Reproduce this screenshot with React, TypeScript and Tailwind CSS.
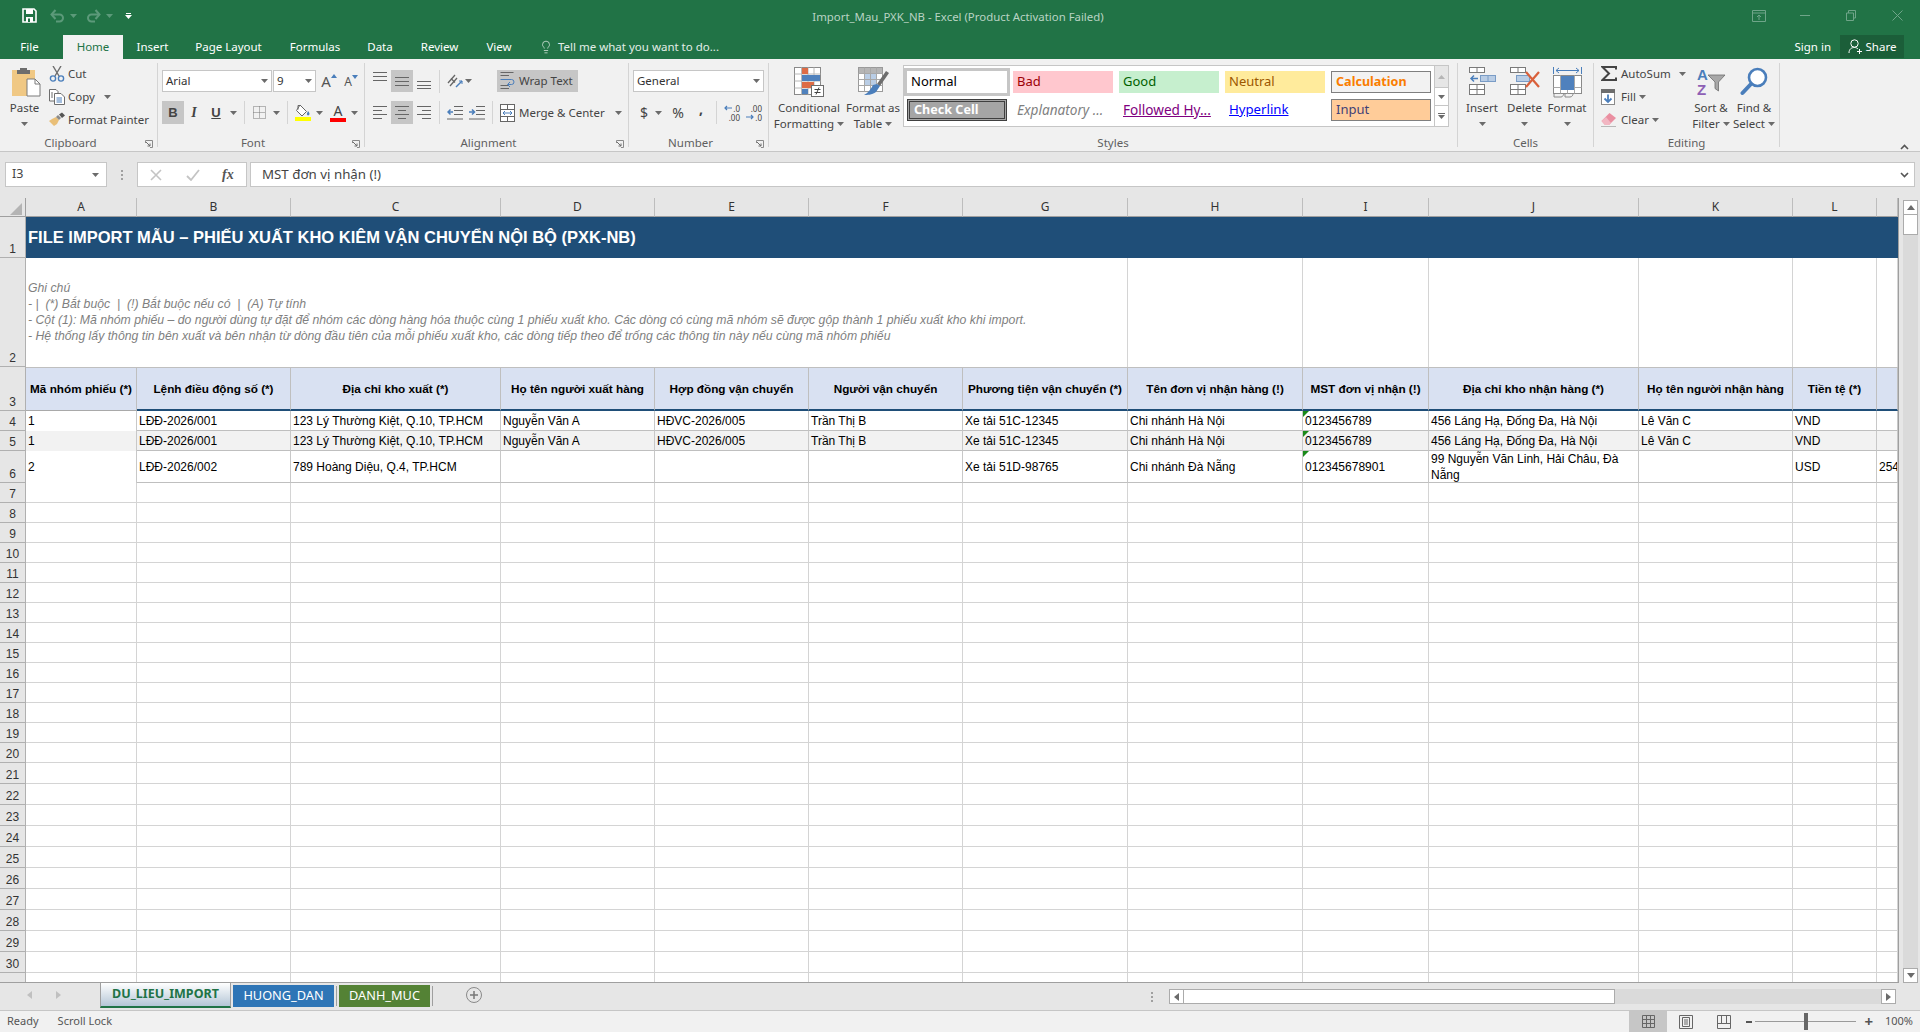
import { Fragment, type ReactNode } from "react";
import { Lightbulb } from "lucide-react";

const BLUE = "#4a7ebb";

function Caret({ color = "#6b6b6b" }: { color?: string }) {
  return (
    <svg width="7" height="4" viewBox="0 0 7 4" className="shrink-0">
      <path d="M0 0h7L3.5 4z" fill={color} />
    </svg>
  );
}

function Launcher() {
  return (
    <svg width="8" height="8" viewBox="0 0 8 8" className="absolute bottom-[-1px] right-[4px]">
      <path d="M0.5 3V0.5H7.5V7.5H5" fill="none" stroke="#8a8a8a" />
      <path d="M1 2l4 4M5 3.5V6H2.5" fill="none" stroke="#6d6d6d" />
    </svg>
  );
}

function Sep({ className }: { className: string }) {
  return <span className={`h-[23px] w-px shrink-0 bg-[#d4d4d4] ${className}`} />;
}

function Group({
  className,
  label,
  launcher,
  children,
}: {
  className: string;
  label: string;
  launcher?: boolean;
  children: ReactNode;
}) {
  return (
    <div className={`relative flex h-[84px] shrink-0 flex-col border-r border-[#d4d4d4] ${className}`}>
      <div className="h-[72px]">{children}</div>
      <div
        className={`-mb-[4px] h-[16px] text-center text-[11.5px] leading-[16px] text-[#5f5f5f] ${
          launcher ? "pr-[16px]" : ""
        }`}
      >
        {label}
      </div>
      {launcher ? <Launcher /> : null}
    </div>
  );
}

function BigBtn({
  className,
  icon,
  line1,
  line2,
}: {
  className: string;
  icon: ReactNode;
  line1: string;
  line2?: string;
}) {
  return (
    <div className={`flex shrink-0 flex-col items-center pt-[4px] text-[11.5px] leading-[16px] text-[#444] ${className}`}>
      <div className="flex h-[33px] items-start justify-center">{icon}</div>
      <div className="whitespace-nowrap">{line1}</div>
      <div className="flex h-[16px] items-center gap-[3px] whitespace-nowrap">
        {line2}
        <Caret />
      </div>
    </div>
  );
}

function Lines({ rows, w = 14, h = 16 }: { rows: [number, number, number][]; w?: number; h?: number }) {
  return (
    <svg width={w} height={h} viewBox={`0 0 ${w} ${h}`}>
      {rows.map(([x1, x2, y]) => (
        <path key={`${x1}-${y}`} d={`M${x1} ${y + 0.5}H${x2}`} stroke="#666" />
      ))}
    </svg>
  );
}

function SaveIcon() {
  return (
    <svg width="15" height="15" viewBox="0 0 15 15">
      <path d="M1 1H12L14 3V14H1z" fill="none" stroke="#fff" strokeWidth="1.6" />
      <rect x="4" y="1" width="7" height="5" fill="#fff" />
      <rect x="4" y="9" width="7" height="5" fill="#fff" />
      <rect x="6" y="10.5" width="2" height="3.5" fill="#217346" />
    </svg>
  );
}

function ArrowIcon({ flip }: { flip?: boolean }) {
  return (
    <svg width="15" height="14" viewBox="0 0 15 14" className={flip ? "-scale-x-100" : ""}>
      <path d="M2 5.5H9.5A3.5 3.5 0 0 1 9.5 12.5H6" fill="none" stroke="#5c9a7a" strokeWidth="2" />
      <path d="M5.5 1L1.5 5.5L5.5 10" fill="none" stroke="#5c9a7a" strokeWidth="2" />
    </svg>
  );
}

function PasteIcon() {
  return (
    <svg width="29" height="30" viewBox="0 0 29 30">
      <rect x="0" y="3" width="23" height="26" fill="#f0c884" />
      <path d="M8 3V1H15V3H18V7H5V3z" fill="#6d6d6d" />
      <path d="M15 12H23L28 17V29H15z" fill="#fff" stroke="#7a7a7a" />
      <path d="M23 12V17H28" fill="none" stroke="#7a7a7a" />
    </svg>
  );
}

function CutIcon() {
  return (
    <svg width="16" height="16" viewBox="0 0 16 16">
      <path d="M4 0L10 10M12 0L6 10" stroke="#6d6d6d" strokeWidth="1.4" />
      <circle cx="4" cy="12.5" r="2.6" fill="none" stroke={BLUE} strokeWidth="1.4" />
      <circle cx="12" cy="12.5" r="2.6" fill="none" stroke={BLUE} strokeWidth="1.4" />
    </svg>
  );
}

function CopyIcon() {
  return (
    <svg width="16" height="16" viewBox="0 0 16 16">
      <path d="M0.5 0.5H7L9 2.5V12H0.5z" fill="#fff" stroke="#6d6d6d" />
      <path d="M5.5 4.5H12L15.5 8V15.5H5.5z" fill="#fff" stroke="#6d6d6d" />
      <path d="M7.5 9H13M7.5 11H13M7.5 13H13" stroke={BLUE} />
      <path d="M2 4H4M2 6H4M2 8H4" stroke="#6d6d6d" />
    </svg>
  );
}

function PainterIcon() {
  return (
    <svg width="17" height="15" viewBox="0 0 17 15">
      <path d="M0 9L5 14L8 12L10 8L7 5L3 7z" fill="#e9bf78" />
      <path d="M7 5L10 8L12 6L9 3z" fill="#8a8a8a" />
      <path d="M10 2.5L13 0.5L16 3.5L13 6z" fill="#555" />
    </svg>
  );
}

function BordersIcon() {
  return (
    <svg width="13" height="13" viewBox="0 0 13 13">
      <path d="M0.5 0.5H12.5V12.5H0.5zM6.5 0.5V12.5M0.5 6.5H12.5" fill="none" stroke="#777" strokeDasharray="1 1" />
    </svg>
  );
}

function FillColorIcon() {
  return (
    <span className="flex flex-col items-center">
      <svg width="16" height="13" viewBox="0 0 16 13">
        <path d="M5 1L11.5 7.5L7 12L1.5 6.5z" fill="#fff" stroke="#666" />
        <path d="M3 5.5V1.5H5" fill="none" stroke="#666" />
        <path d="M13 7C14.5 9 15 10 14 11C13 12 11.5 11 12 9.5z" fill={BLUE} />
      </svg>
      <span className="h-[4px] w-[16px] bg-[#ffff00]" />
    </span>
  );
}

function OrientIcon() {
  return (
    <svg width="16" height="16" viewBox="0 0 16 16">
      <path d="M1 10L8 2M3 13L10 5" stroke="#666" strokeWidth="1.3" />
      <path d="M4 5.5L8 9.5" stroke="#666" strokeWidth="1.3" />
      <path d="M9 14L15 8" stroke={BLUE} strokeWidth="1.5" />
      <path d="M15 8V11M15 8H12" stroke={BLUE} />
    </svg>
  );
}

function WrapIcon() {
  return (
    <svg width="15" height="18" viewBox="0 0 15 18">
      <path d="M0.5 0.5H13.5M0.5 13.5H9M0.5 16.5H9" stroke="#666" />
      <path d="M0.5 3.5H9" stroke="#666" />
      <path d="M0.5 7.5H11.5A2.5 2.5 0 0 1 11.5 12.5H8" fill="none" stroke={BLUE} />
      <path d="M10 10L7.5 12.5L10 15" fill="none" stroke={BLUE} />
    </svg>
  );
}

function MergeIcon() {
  return (
    <svg width="15" height="18" viewBox="0 0 15 18">
      <rect x="0.5" y="0.5" width="14" height="17" fill="#fff" stroke="#666" />
      <path d="M0.5 5.5H14.5M0.5 12.5H14.5M7.5 0.5V5.5M7.5 12.5V17.5" stroke="#666" />
      <path d="M3 9H12M5 7L3 9L5 11M10 7L12 9L10 11" fill="none" stroke={BLUE} />
    </svg>
  );
}

function IndentIcon({ flip }: { flip?: boolean }) {
  return (
    <svg width="16" height="14" viewBox="0 0 16 14">
      <path d="M7 0.5H16M7 4.5H16M7 8.5H16M0 13H16" stroke="#666" />
      <path
        d={flip ? "M0 6H5M3 3.5L5.5 6L3 8.5" : "M6 6H1M3.5 3.5L1 6L3.5 8.5"}
        fill="none"
        stroke={BLUE}
        strokeWidth="1.5"
      />
    </svg>
  );
}

function DecimalIcon({ more }: { more?: boolean }) {
  return (
    <span className="relative flex h-[18px] w-[16px] flex-col items-end text-[8px] leading-[9px] text-[#444]">
      <span>{more ? ".0" : ".00"}</span>
      <span>{more ? ".00" : ".0"}</span>
      <svg width="8" height="6" viewBox="0 0 8 6" className={`absolute left-0 ${more ? "top-[1px]" : "top-[10px]"}`}>
        <path
          d={more ? "M8 3H1M3 1L1 3L3 5" : "M0 3H7M5 1L7 3L5 5"}
          fill="none"
          stroke={BLUE}
          strokeWidth="1.2"
        />
      </svg>
    </span>
  );
}

function CondFormatIcon() {
  return (
    <svg width="30" height="30" viewBox="0 0 30 30">
      <rect x="0.5" y="0.5" width="26" height="27" fill="#fff" stroke="#8a8a8a" />
      <path d="M7.5 0.5V27.5M14 0.5V27.5M20 0.5V27.5M0.5 7H26.5M0.5 14H26.5M0.5 21H26.5" stroke="#b8b8b8" />
      <rect x="8" y="1" width="6" height="6" fill="#dd6c46" />
      <rect x="8" y="8" width="18" height="6" fill="#4f81bd" />
      <rect x="8" y="15" width="12" height="6" fill="#dd6c46" />
      <rect x="8" y="22" width="6" height="5" fill="#4f81bd" />
      <rect x="17.5" y="18.5" width="12" height="11" fill="#fff" stroke="#6d6d6d" />
      <path d="M20.5 22.5H26.5M20.5 25.5H26.5M25 20.5L22 27.5" stroke="#444" />
    </svg>
  );
}

function FormatTableIcon() {
  return (
    <svg width="31" height="29" viewBox="0 0 31 29">
      <rect x="0.5" y="0.5" width="24" height="24" fill="#fff" stroke="#9a9a9a" />
      <rect x="1" y="1" width="23" height="5" fill="#b5b5b5" />
      <rect x="6" y="6" width="13" height="13" fill="#b9cde5" />
      <path d="M6.5 0.5V24.5M12.5 0.5V24.5M18.5 0.5V24.5M0.5 6.5H24.5M0.5 12.5H24.5M0.5 18.5H24.5" stroke="#a8a8a8" />
      <path d="M19 17L28 4L31 6L22 19z" fill="#6d6d6d" />
      <path d="M19 17L22 19L18 25C14 28 9 28 6 28C10 26 13 22 15 18z" fill={BLUE} />
    </svg>
  );
}

function SmallGrid({ x, y, w, h, cols, rows }: { x: number; y: number; w: number; h: number; cols: number; rows: number }) {
  const d: string[] = [];
  for (let i = 1; i < cols; i++) d.push(`M${x + (w * i) / cols} ${y}V${y + h}`);
  for (let i = 1; i < rows; i++) d.push(`M${x} ${y + (h * i) / rows}H${x + w}`);
  return (
    <>
      <rect x={x} y={y} width={w} height={h} fill="#fff" stroke="#7a7a7a" />
      <path d={d.join("")} stroke="#7a7a7a" fill="none" />
    </>
  );
}

function InsertIcon() {
  return (
    <svg width="27" height="28" viewBox="0 0 27 28">
      <SmallGrid x={0.5} y={0.5} w={15} h={5} cols={2} rows={1} />
      <rect x="11.5" y="8.5" width="15" height="6" fill="#b9cde5" stroke="#7a9cc6" />
      <path d="M19 8.5V14.5" stroke="#7a9cc6" />
      <path d="M9 11.5H2M5 8.5L2 11.5L5 14.5" fill="none" stroke={BLUE} strokeWidth="1.5" />
      <SmallGrid x={0.5} y={17.5} w={15} h={10} cols={2} rows={2} />
    </svg>
  );
}

function DeleteIcon() {
  return (
    <svg width="30" height="28" viewBox="0 0 30 28">
      <SmallGrid x={0.5} y={0.5} w={15} h={5} cols={2} rows={1} />
      <rect x="6.5" y="8.5" width="13" height="6" fill="#b9cde5" stroke="#7a9cc6" />
      <SmallGrid x={0.5} y={17.5} w={15} h={10} cols={2} rows={2} />
      <path d="M16 5L29 20M29 5L16 20" stroke="#d9603b" strokeWidth="2.2" />
    </svg>
  );
}

function FormatCellsIcon() {
  return (
    <svg width="29" height="32" viewBox="0 0 29 32">
      <path d="M3 3.5H26M6 1L3 3.5L6 6M23 1L26 3.5L23 6M0.5 0V7M28.5 0V7" fill="none" stroke={BLUE} />
      <rect x="0.5" y="8.5" width="28" height="18" fill="#fff" stroke="#8a8a8a" />
      <path d="M7.5 8.5V26.5M21.5 8.5V26.5M0.5 20.5H28.5M14.5 20.5V26.5" stroke="#a8a8a8" />
      <rect x="8" y="9" width="13" height="14" fill="#4f81bd" />
      <path d="M1 27V30H8C10 30 10 28 11 27M12 27V30H17C19 30 20 28 20 27" fill="none" stroke="#8a8a8a" />
    </svg>
  );
}

function SigmaIcon() {
  return (
    <svg width="16" height="15" viewBox="0 0 16 15">
      <path d="M15 3.5V1H1.5L8 7.5L1.5 14H15V11.5" fill="none" stroke="#444" strokeWidth="2" />
    </svg>
  );
}

function FillDownIcon() {
  return (
    <svg width="14" height="16" viewBox="0 0 14 16">
      <rect x="0.5" y="0.5" width="13" height="15" fill="#fff" stroke="#8a8a8a" />
      <rect x="0" y="0" width="14" height="4" fill="#6d6d6d" />
      <path d="M7 5.5V13M3.5 9.5L7 13L10.5 9.5" fill="none" stroke={BLUE} strokeWidth="1.8" />
    </svg>
  );
}

function EraserIcon() {
  return (
    <svg width="16" height="15" viewBox="0 0 16 15">
      <path d="M0.5 9L8.5 1L15 6L8 13H4z" fill="#ea8fa1" />
      <path d="M0.5 9L4 13H8L10 11L5 5z" fill="#f2b6c2" />
      <path d="M0 14.5H15" stroke="#b8b8b8" />
    </svg>
  );
}

function SortIcon() {
  return (
    <svg width="29" height="29" viewBox="0 0 29 29">
      <text x="0" y="13" fontFamily="Liberation Sans" fontWeight="700" fontSize="15" fill={BLUE}>
        A
      </text>
      <text x="0" y="28" fontFamily="Liberation Sans" fontWeight="700" fontSize="15" fill="#8e5fb5">
        Z
      </text>
      <path d="M11 8H28L21.5 15V24L18 21.5V15z" fill="#a8a8a8" stroke="#6d6d6d" strokeWidth="0.8" />
    </svg>
  );
}

function FindIcon() {
  return (
    <svg width="28" height="29" viewBox="0 0 28 29">
      <circle cx="17.5" cy="10.5" r="8.5" fill="#fff" stroke={BLUE} strokeWidth="2.6" />
      <path d="M11 17L2.5 26" stroke={BLUE} strokeWidth="4" strokeLinecap="round" />
    </svg>
  );
}

function TitleBar() {
  return (
    <div className="flex h-[35px] shrink-0 items-center bg-[#217346]">
      <div className="flex w-[398px] items-center pb-[4px] pl-[22px]">
        <SaveIcon />
        <span className="ml-[13px]">
          <ArrowIcon />
        </span>
        <span className="ml-[5px]">
          <Caret color="#5c9a7a" />
        </span>
        <span className="ml-[9px]">
          <ArrowIcon flip />
        </span>
        <span className="ml-[5px]">
          <Caret color="#5c9a7a" />
        </span>
        <span className="ml-[12px] flex flex-col items-center gap-[1px]">
          <span className="h-px w-[5px] bg-white" />
          <Caret color="#fff" />
        </span>
      </div>
      <div className="flex-1 pb-[1px] text-center text-[11.4px] text-[#b9d4c4]">
        Import_Mau_PXK_NB - Excel (Product Activation Failed)
      </div>
      <div className="flex w-[402px] items-center justify-end pb-[4px] pr-[17px]">
        <svg width="14" height="12" viewBox="0 0 14 12" className="mr-[34px]">
          <path d="M0.5 0.5H13.5V11.5H0.5zM0.5 3H13.5M7 10V5M5 7L7 5L9 7" fill="none" stroke="#6fa589" />
        </svg>
        <span className="mr-[36px] h-px w-[10px] bg-[#6fa589]" />
        <svg width="10" height="11" viewBox="0 0 10 11" className="mr-[36px]">
          <path d="M0.5 3H7.5V10.5H0.5zM2.5 3V0.5H9.5V8H7.5" fill="none" stroke="#6fa589" />
        </svg>
        <svg width="11" height="11" viewBox="0 0 11 11">
          <path d="M0.5 0.5L10.5 10.5M10.5 0.5L0.5 10.5" stroke="#6fa589" />
        </svg>
      </div>
    </div>
  );
}

function TabBar() {
  return (
    <div className="flex h-[24px] shrink-0 items-stretch bg-[#217346] text-[11.5px] leading-[24px] text-white">
      <div className="w-[59px] text-center">File</div>
      <div className="ml-[4px] w-[60px] bg-[#f1f1f1] text-center text-[#217346]">Home</div>
      <div className="w-[59px] text-center">Insert</div>
      <div className="w-[93px] text-center">Page Layout</div>
      <div className="w-[80px] text-center">Formulas</div>
      <div className="w-[50px] text-center">Data</div>
      <div className="w-[69px] text-center">Review</div>
      <div className="w-[50px] text-center">View</div>
      <div className="ml-[15px] flex items-center gap-[5px] text-[#e3eee8]">
        <Lightbulb size={14} strokeWidth={1.25} />
        <span>Tell me what you want to do...</span>
      </div>
      <div className="ml-auto mr-[9px]">Sign in</div>
      <div className="mr-[16px] flex h-[23px] w-[64px] items-center justify-center gap-[3px] bg-[#1b5e39]">
        <svg width="15" height="15" viewBox="0 0 15 15">
          <circle cx="6.5" cy="4.5" r="3.7" fill="none" stroke="#fff" />
          <path d="M1 14C1 10 3.5 8.5 6.5 8.5C8 8.5 9 9 10 10" fill="none" stroke="#fff" />
          <path d="M11.5 10V15M9 12.5H14" stroke="#fff" />
        </svg>
        <span>Share</span>
      </div>
    </div>
  );
}

function ClipboardGroup() {
  return (
    <Group className="w-[158px]" label="Clipboard" launcher>
      <div className="flex">
        <div className="flex w-[49px] flex-col items-center pt-[4px] text-[11.5px] leading-[16px] text-[#444]">
          <div className="ml-[4px] h-[33px]">
            <PasteIcon />
          </div>
          <div>Paste</div>
          <div className="flex h-[16px] items-center">
            <Caret />
          </div>
        </div>
        <div className="-mt-[1px] flex flex-col text-[11.5px] text-[#444]">
          <div className="flex h-[23px] items-center">
            <span className="flex w-[19px]">
              <CutIcon />
            </span>
            Cut
          </div>
          <div className="flex h-[23px] items-center">
            <span className="flex w-[19px]">
              <CopyIcon />
            </span>
            Copy
            <span className="ml-[9px]">
              <Caret />
            </span>
          </div>
          <div className="flex h-[23px] items-center">
            <span className="flex w-[19px]">
              <PainterIcon />
            </span>
            Format Painter
          </div>
        </div>
      </div>
    </Group>
  );
}

function FontGroup() {
  return (
    <Group className="w-[207px]" label="Font" launcher>
      <div className="mt-[7px] flex h-[22px] items-stretch pl-[4px] text-[11.5px] text-[#333]">
        <div className="flex w-[110px] items-center justify-between border border-[#c6c6c6] bg-white px-[3px]">
          Arial
          <Caret />
        </div>
        <div className="ml-px flex w-[43px] items-center justify-between border border-[#c6c6c6] bg-white px-[3px]">
          9
          <Caret />
        </div>
        <div className="ml-[3px] flex w-[20px] items-center justify-center text-[15px] text-[#555]">
          A
          <svg width="6" height="4" viewBox="0 0 6 4" className="mb-[10px]">
            <path d="M3 0L6 4H0z" fill={BLUE} />
          </svg>
        </div>
        <div className="ml-[2px] flex w-[20px] items-center justify-center pt-[2px] text-[12px] text-[#555]">
          A
          <svg width="6" height="4" viewBox="0 0 6 4" className="mb-[10px]">
            <path d="M0 0H6L3 4z" fill={BLUE} />
          </svg>
        </div>
      </div>
      <div className="mt-[9px] flex h-[23px] items-center pl-[4px] font-['Liberation_Sans',sans-serif] text-[13px] text-[#444]">
        <span className="flex h-full w-[22px] items-center justify-center bg-[#c6c6c6] font-bold">B</span>
        <span className="w-[20px] text-center font-['Liberation_Serif',serif] text-[14px] font-bold italic">I</span>
        <span className="ml-[2px] w-[20px] text-center font-bold underline">U</span>
        <span className="flex w-[14px] justify-center">
          <Caret />
        </span>
        <Sep className="ml-[4px]" />
        <span className="flex w-[28px] justify-center">
          <BordersIcon />
        </span>
        <span className="flex w-[7px] justify-center">
          <Caret />
        </span>
        <Sep className="ml-[7px]" />
        <span className="ml-[7px] flex w-[16px] justify-center">
          <FillColorIcon />
        </span>
        <span className="ml-[5px] flex w-[7px] justify-center">
          <Caret />
        </span>
        <span className="ml-[7px] flex w-[16px] flex-col items-center font-['Noto_Sans',sans-serif] text-[14px] leading-[14px]">
          A
          <span className="h-[4px] w-[16px] bg-[#ff0000]" />
        </span>
        <span className="ml-[5px] flex w-[7px] justify-center">
          <Caret />
        </span>
      </div>
    </Group>
  );
}

function AlignmentGroup() {
  return (
    <Group className="w-[264px]" label="Alignment" launcher>
      <div className="mt-[7px] flex h-[22px] items-center pl-[8px] text-[11.5px] text-[#444]">
        <span className="flex w-[14px]">
          <Lines rows={[[0, 14, 2], [0, 14, 6], [0, 14, 10]]} h={22} />
        </span>
        <span className="ml-[4px] flex h-full w-[22px] items-center justify-center bg-[#c6c6c6]">
          <Lines rows={[[0, 14, 7], [0, 14, 11], [0, 14, 15]]} h={22} />
        </span>
        <span className="ml-[4px] flex w-[14px]">
          <Lines rows={[[0, 14, 11], [0, 14, 15], [0, 14, 18]]} h={22} />
        </span>
        <Sep className="ml-[8px]" />
        <span className="ml-[7px] flex w-[16px]">
          <OrientIcon />
        </span>
        <span className="ml-[2px] flex w-[7px]">
          <Caret />
        </span>
        <span className="ml-[25px] flex h-full w-[81px] items-center bg-[#c6c6c6] pl-[3px]">
          <WrapIcon />
          <span className="ml-[4px] whitespace-nowrap">Wrap Text</span>
        </span>
      </div>
      <div className="mt-[9px] flex h-[23px] items-center pl-[8px] text-[11.5px] text-[#444]">
        <span className="flex w-[14px]">
          <Lines rows={[[0, 14, 1], [0, 9, 5], [0, 14, 9], [0, 9, 13]]} />
        </span>
        <span className="ml-[4px] flex h-full w-[22px] items-center justify-center bg-[#c6c6c6]">
          <Lines rows={[[0, 14, 1], [3, 11, 5], [0, 14, 9], [3, 11, 13]]} />
        </span>
        <span className="ml-[4px] flex w-[14px]">
          <Lines rows={[[0, 14, 1], [5, 14, 5], [0, 14, 9], [5, 14, 13]]} />
        </span>
        <Sep className="ml-[8px]" />
        <span className="ml-[7px] flex w-[16px]">
          <IndentIcon />
        </span>
        <span className="ml-[6px] flex w-[16px]">
          <IndentIcon flip />
        </span>
        <Sep className="ml-[7px]" />
        <span className="ml-[7px] flex w-[15px]">
          <MergeIcon />
        </span>
        <span className="ml-[4px] whitespace-nowrap">Merge &amp; Center</span>
        <span className="ml-[10px]">
          <Caret />
        </span>
      </div>
    </Group>
  );
}

function NumberGroup() {
  return (
    <Group className="w-[140px]" label="Number" launcher>
      <div className="mt-[7px] flex h-[22px] pl-[4px] text-[11.5px] text-[#333]">
        <div className="flex w-[131px] items-center justify-between border border-[#c6c6c6] bg-white px-[3px]">
          General
          <Caret />
        </div>
      </div>
      <div className="mt-[9px] flex h-[23px] items-center pl-[10px] text-[14px] text-[#444]">
        <span className="w-[10px] text-center">$</span>
        <span className="ml-[6px] flex w-[7px]">
          <Caret />
        </span>
        <span className="ml-[7px] w-[18px] text-center">%</span>
        <span className="ml-[10px] mb-[8px] w-[8px] text-center font-bold leading-[10px]">,</span>
        <Sep className="ml-[11px]" />
        <span className="ml-[7px]">
          <DecimalIcon more />
        </span>
        <span className="ml-[6px]">
          <DecimalIcon />
        </span>
      </div>
    </Group>
  );
}

function StyleCell({ className, children }: { className: string; children: string }) {
  return (
    <div className={`flex h-[22px] w-[100px] items-center overflow-hidden whitespace-nowrap pl-[4px] ${className}`}>
      {children}
    </div>
  );
}

function StylesGroup() {
  return (
    <Group className="w-[689px]" label="Styles">
      <div className="flex">
        <BigBtn className="ml-[6px] w-[68px]" icon={<CondFormatIcon />} line1="Conditional" line2="Formatting" />
        <BigBtn className="w-[60px]" icon={<FormatTableIcon />} line1="Format as" line2="Table" />
        <div className="mt-[2px] flex h-[62px] w-[546px] border border-[#c6c6c6] bg-white">
          <div className="grid w-[528px] grid-cols-[100px_100px_100px_100px_100px] content-start gap-x-[6px] gap-y-[6px] pl-[3px] pt-[5px]">
            <StyleCell className="bg-white text-[13px] text-black shadow-[0_0_0_3px_#c6c6c6]">Normal</StyleCell>
            <StyleCell className="bg-[#ffc7ce] text-[13px] text-[#9c0006]">Bad</StyleCell>
            <StyleCell className="bg-[#c6efce] text-[13px] text-[#006100]">Good</StyleCell>
            <StyleCell className="bg-[#ffeb9c] text-[13px] text-[#9c5700]">Neutral</StyleCell>
            <StyleCell className="border border-[#7f7f7f] bg-[#f2f2f2] text-[12.6px] font-bold text-[#fa7d00]">Calculation</StyleCell>
            <StyleCell className="border-[3px] border-double border-[#3f3f3f] bg-[#a5a5a5] pl-[1px] text-[12.6px] font-bold text-white">
              Check Cell
            </StyleCell>
            <StyleCell className="text-[13.6px] italic text-[#7f7f7f]">Explanatory ...</StyleCell>
            <StyleCell className="text-[13.6px] text-[#800080] underline">Followed Hy...</StyleCell>
            <StyleCell className="text-[13.2px] text-[#0000ff] underline">Hyperlink</StyleCell>
            <StyleCell className="border border-[#7f7f7f] bg-[#ffcc99] text-[13px] text-[#3f3f76]">Input</StyleCell>
          </div>
          <div className="ml-auto flex w-[14px] flex-col border-l border-[#c6c6c6]">
            <div className="flex h-[21px] items-center justify-center bg-[#e6e6e6]">
              <svg width="7" height="4" viewBox="0 0 7 4">
                <path d="M0 4H7L3.5 0z" fill="#b5b5b5" />
              </svg>
            </div>
            <div className="flex h-[19px] items-center justify-center border-y border-[#c6c6c6]">
              <Caret />
            </div>
            <div className="flex flex-1 flex-col items-center justify-center gap-[1px]">
              <span className="h-px w-[7px] bg-[#6b6b6b]" />
              <Caret />
            </div>
          </div>
        </div>
      </div>
    </Group>
  );
}

function CellsGroup() {
  return (
    <Group className="w-[136px]" label="Cells">
      <div className="flex pl-[3px]">
        <BigBtn className="w-[42px]" icon={<InsertIcon />} line1="Insert" />
        <BigBtn className="w-[43px]" icon={<DeleteIcon />} line1="Delete" />
        <BigBtn className="w-[42px]" icon={<FormatCellsIcon />} line1="Format" />
      </div>
    </Group>
  );
}

function EditingGroup() {
  return (
    <Group className="w-[186px]" label="Editing">
      <div className="flex">
        <div className="-mt-[1px] flex w-[96px] flex-col pl-[7px] text-[11.5px] text-[#444]">
          <div className="flex h-[23px] items-center">
            <span className="flex w-[20px]">
              <SigmaIcon />
            </span>
            AutoSum
            <span className="ml-[8px]">
              <Caret />
            </span>
          </div>
          <div className="flex h-[23px] items-center">
            <span className="flex w-[20px]">
              <FillDownIcon />
            </span>
            Fill
            <span className="ml-[3px]">
              <Caret />
            </span>
          </div>
          <div className="flex h-[23px] items-center">
            <span className="flex w-[20px]">
              <EraserIcon />
            </span>
            Clear
            <span className="ml-[3px]">
              <Caret />
            </span>
          </div>
        </div>
        <BigBtn className="w-[42px]" icon={<SortIcon />} line1="Sort &" line2="Filter" />
        <BigBtn className="w-[44px]" icon={<FindIcon />} line1="Find &" line2="Select" />
      </div>
    </Group>
  );
}

function Ribbon() {
  return (
    <div className="flex h-[93px] shrink-0 border-b border-[#c6c6c6] bg-[#f1f1f1] pt-[4px]">
      <ClipboardGroup />
      <FontGroup />
      <AlignmentGroup />
      <NumberGroup />
      <StylesGroup />
      <CellsGroup />
      <EditingGroup />
      <div className="flex flex-1 items-end justify-end pb-[1px] pr-[11px]">
        <svg width="9" height="6" viewBox="0 0 9 6">
          <path d="M1 5L4.5 1.5L8 5" fill="none" stroke="#555" strokeWidth="1.6" />
        </svg>
      </div>
    </div>
  );
}

function FormulaBar() {
  return (
    <div className="flex h-[46px] shrink-0 bg-[#e6e6e6] pb-[11px] pl-[5px] pr-[5px] pt-[10px] text-[12.5px] text-[#444]">
      <div className="flex w-[102px] items-center justify-between border border-[#c6c6c6] bg-white pl-[6px] pr-[7px]">
        I3
        <Caret />
      </div>
      <div className="flex w-[30px] flex-col items-center justify-center gap-[2px]">
        <span className="h-[2px] w-[2px] bg-[#a0a0a0]" />
        <span className="h-[2px] w-[2px] bg-[#a0a0a0]" />
        <span className="h-[2px] w-[2px] bg-[#a0a0a0]" />
      </div>
      <div className="flex w-[110px] items-center border border-[#c6c6c6] bg-white pl-[12px]">
        <svg width="12" height="12" viewBox="0 0 12 12">
          <path d="M1 1L11 11M11 1L1 11" stroke="#c4c4c4" strokeWidth="1.6" />
        </svg>
        <svg width="14" height="12" viewBox="0 0 14 12" className="ml-[24px]">
          <path d="M1 7L5 11L13 1" fill="none" stroke="#c4c4c4" strokeWidth="1.8" />
        </svg>
        <span className="ml-[22px] font-['Liberation_Serif',serif] text-[14px] font-bold italic text-[#555]">fx</span>
      </div>
      <div className="ml-[3px] flex flex-1 items-center justify-between border border-[#c6c6c6] bg-white pl-[11px] pr-[5px] text-[13.3px]">
        MST đơn vị nhận (!)
        <svg width="9" height="6" viewBox="0 0 9 6">
          <path d="M1 1L4.5 4.5L8 1" fill="none" stroke="#555" strokeWidth="1.6" />
        </svg>
      </div>
    </div>
  );
}

const COLS = ["A", "B", "C", "D", "E", "F", "G", "H", "I", "J", "K", "L", "M"];

const HEADERS = [
  "Mã nhóm phiếu (*)",
  "Lệnh điều động số (*)",
  "Địa chỉ kho xuất (*)",
  "Họ tên người xuất hàng",
  "Hợp đồng vận chuyển",
  "Người vận chuyển",
  "Phương tiện vận chuyển (*)",
  "Tên đơn vị nhận hàng (!)",
  "MST đơn vị nhận (!)",
  "Địa chỉ kho nhận hàng (*)",
  "Họ tên người nhận hàng",
  "Tiền tệ (*)",
  "",
];

const DATA = [
  {
    row: 4,
    tint: false,
    cells: ["1", "LĐĐ-2026/001", "123 Lý Thường Kiệt, Q.10, TP.HCM", "Nguyễn Văn A", "HĐVC-2026/005", "Trần Thị B", "Xe tải 51C-12345", "Chi nhánh Hà Nội", "0123456789", "456 Láng Hạ, Đống Đa, Hà Nội", "Lê Văn C", "VND", ""],
  },
  {
    row: 5,
    tint: true,
    cells: ["1", "LĐĐ-2026/001", "123 Lý Thường Kiệt, Q.10, TP.HCM", "Nguyễn Văn A", "HĐVC-2026/005", "Trần Thị B", "Xe tải 51C-12345", "Chi nhánh Hà Nội", "0123456789", "456 Láng Hạ, Đống Đa, Hà Nội", "Lê Văn C", "VND", ""],
  },
  {
    row: 6,
    tint: false,
    cells: ["2", "LĐĐ-2026/002", "789 Hoàng Diệu, Q.4, TP.HCM", "", "", "", "Xe tải 51D-98765", "Chi nhánh Đà Nẵng", "012345678901", "99 Nguyễn Văn Linh, Hải Châu, Đà Nẵng", "", "USD", "2540"],
  },
];

const BLANK_ROWS = Array.from({ length: 25 }, (_, i) => i + 7);

function RowHead({ n }: { n: number }) {
  return (
    <div
      className={`flex justify-center overflow-hidden border-b border-r border-[#b0b0b0] bg-[#e6e6e6] text-[12px] leading-[15px] text-[#333] ${
        n === 31 ? "items-start pt-[7px]" : "items-end"
      }`}
    >
      {n}
    </div>
  );
}

function Sheet() {
  return (
    <div className="flex h-[785px] shrink-0 bg-[#e6e6e6]">
      <div className="grid h-full w-[1898px] grid-cols-[26px_111px_154px_210px_154px_154px_154px_165px_175px_126px_210px_154px_84px_21px] grid-rows-[19px_41px_109px_44px_20px_20px_32px_repeat(14,20px)_repeat(10,21px)_10px] overflow-hidden border-b border-[#9f9f9f] bg-white font-['Liberation_Sans',Arial,sans-serif] text-[12px] text-black">
        <div className="flex items-end justify-end border-b border-r border-[#9f9f9f] bg-[#e6e6e6] pb-[1px] pr-[3px]">
          <svg width="12" height="12" viewBox="0 0 12 12">
            <path d="M12 0V12H0z" fill="#b4b4b4" />
          </svg>
        </div>
        {COLS.map((c) => (
          <div
            key={c}
            className="flex items-center justify-center border-b border-r border-b-[#9f9f9f] border-r-[#bdbdbd] bg-[#e6e6e6] font-['Noto_Sans',sans-serif] text-[12px] text-[#333]"
          >
            {c === "M" ? "" : c}
          </div>
        ))}

        <RowHead n={1} />
        <div className="col-span-13 flex items-center bg-[#1f4e78] pl-[2px] text-[16.5px] font-bold text-white">
          FILE IMPORT MẪU – PHIẾU XUẤT KHO KIÊM VẬN CHUYỂN NỘI BỘ (PXK-NB)
        </div>

        <RowHead n={2} />
        <div className="col-span-7 flex flex-col justify-center overflow-hidden whitespace-nowrap border-r border-[#d4d4d4] pb-[2px] pl-[2px] text-[12.25px] italic leading-[16px] text-[#7f7f7f]">
          <div>Ghi chú</div>
          <div>- |&nbsp; (*) Bắt buộc&nbsp; |&nbsp; (!) Bắt buộc nếu có&nbsp; |&nbsp; (A) Tự tính</div>
          <div>
            - Cột (1): Mã nhóm phiếu – do người dùng tự đặt để nhóm các dòng hàng hóa thuộc cùng 1 phiếu xuất kho. Các dòng có cùng mã nhóm sẽ được gộp thành 1 phiếu xuất kho khi import.
          </div>
          <div>
            - Hệ thống lấy thông tin bên xuất và bên nhận từ dòng đầu tiên của mỗi phiếu xuất kho, các dòng tiếp theo để trống các thông tin này nếu cùng mã nhóm phiếu
          </div>
        </div>
        {COLS.slice(7).map((c) => (
          <div key={c} className="border-r border-[#d4d4d4]" />
        ))}

        <RowHead n={3} />
        {HEADERS.map((h, i) => (
          <div
            key={h || "blank"}
            className={`flex items-center justify-center whitespace-nowrap border-r border-t border-r-[#bfbfbf] border-t-[#bfbfbf] bg-[#d9e1f2] text-center text-[11.75px] font-bold ${
              i === 0 ? "border-b border-b-[#a9a9a9]" : "border-b-2 border-b-[#1f4e78]"
            }`}
          >
            {h}
          </div>
        ))}

        {DATA.map((r) => (
          <Fragment key={r.row}>
            <RowHead n={r.row} />
            {r.cells.map((text, i) => (
              <div
                key={`${r.row}-${i}`}
                className={`relative flex items-center overflow-hidden border-r border-r-[#c8c8c8] pl-[2px] leading-[16px] ${
                  i === 0 ? "" : "border-b border-b-[#bfbfbf]"
                } ${r.tint ? "bg-[#f2f2f2]" : "bg-white"} ${i === 12 ? "whitespace-nowrap" : ""}`}
              >
                {i === 8 ? (
                  <svg width="6" height="6" viewBox="0 0 6 6" className="absolute left-0 top-0">
                    <path d="M0 0H6L0 6z" fill="#1a8a1a" />
                  </svg>
                ) : null}
                {text}
              </div>
            ))}
          </Fragment>
        ))}

        {BLANK_ROWS.map((n) => (
          <Fragment key={n}>
            <RowHead n={n} />
            {COLS.map((c) => (
              <div
                key={c}
                className={`border-r border-[#d4d4d4] ${n === 7 && c === "A" ? "border-b border-b-[#d4d4d4]" : "border-b"}`}
              />
            ))}
          </Fragment>
        ))}
      </div>

      <div className="flex w-[22px] flex-col items-start border-l border-[#9f9f9f] pl-[4px] pt-[2px]">
        <div className="flex h-[15px] w-[15px] items-center justify-center border border-[#ababab] bg-white">
          <svg width="8" height="5" viewBox="0 0 8 5">
            <path d="M0 5H8L4 0z" fill="#6b6b6b" />
          </svg>
        </div>
        <div className="h-[20px] w-[15px] border border-t-0 border-[#ababab] bg-white" />
        <div className="w-[15px] flex-1 bg-[#dadada]" />
        <div className="flex h-[15px] w-[15px] items-center justify-center border border-[#ababab] bg-white">
          <svg width="8" height="5" viewBox="0 0 8 5">
            <path d="M0 0H8L4 5z" fill="#6b6b6b" />
          </svg>
        </div>
      </div>
    </div>
  );
}

function SheetTabs() {
  return (
    <div className="flex h-[27px] shrink-0 items-start bg-[#e6e6e6] text-[12.75px]">
      <div className="flex h-[24px] w-[100px] items-center pl-[27px]">
        <svg width="5" height="8" viewBox="0 0 5 8">
          <path d="M5 0V8L0 4z" fill="#c0c0c0" />
        </svg>
        <svg width="5" height="8" viewBox="0 0 5 8" className="ml-[24px]">
          <path d="M0 0V8L5 4z" fill="#c0c0c0" />
        </svg>
      </div>
      <div className="flex h-[25px] w-[131px] items-center justify-center border-x border-b-2 border-x-[#9f9f9f] border-b-[#217346] bg-linear-to-b from-white to-[#b5c6d6] text-[12.5px] font-bold text-[#217346]">
        DU_LIEU_IMPORT
      </div>
      <div className="ml-[2px] mt-[2px] flex h-[22px] w-[101px] items-center justify-center bg-[#2e75b6] text-white">
        HUONG_DAN
      </div>
      <span className="ml-[2px] mt-[3px] h-[20px] w-px bg-[#9f9f9f]" />
      <div className="ml-[2px] mt-[2px] flex h-[22px] w-[91px] items-center justify-center bg-[#548235] text-white">
        DANH_MUC
      </div>
      <span className="ml-[2px] mt-[3px] h-[20px] w-px bg-[#9f9f9f]" />
      <div className="ml-[33px] mt-[4px] flex h-[16px] w-[16px] items-center justify-center rounded-full border border-[#8a8a8a]">
        <svg width="8" height="8" viewBox="0 0 8 8">
          <path d="M4 0V8M0 4H8" stroke="#777" strokeWidth="1.5" />
        </svg>
      </div>
      <div className="ml-auto mt-[6px] flex items-center pr-[24px]">
        <div className="mr-[16px] flex flex-col gap-[2px]">
          <span className="h-[2px] w-[2px] bg-[#a0a0a0]" />
          <span className="h-[2px] w-[2px] bg-[#a0a0a0]" />
          <span className="h-[2px] w-[2px] bg-[#a0a0a0]" />
        </div>
        <div className="flex h-[15px] w-[727px] bg-[#dadada]">
          <div className="flex w-[15px] items-center justify-center border border-[#ababab] bg-white">
            <svg width="5" height="8" viewBox="0 0 5 8">
              <path d="M5 0V8L0 4z" fill="#6b6b6b" />
            </svg>
          </div>
          <div className="w-[431px] border border-l-0 border-[#ababab] bg-white" />
          <div className="ml-auto flex w-[15px] items-center justify-center border border-[#ababab] bg-white">
            <svg width="5" height="8" viewBox="0 0 5 8">
              <path d="M0 0V8L5 4z" fill="#6b6b6b" />
            </svg>
          </div>
        </div>
      </div>
    </div>
  );
}

function StatusBar() {
  return (
    <div className="flex h-[22px] shrink-0 items-center border-t border-[#c6c6c6] bg-[#f1f1f1] text-[11px] text-[#555]">
      <span className="ml-[7px]">Ready</span>
      <span className="ml-[19px]">Scroll Lock</span>
      <div className="ml-auto flex h-full items-center">
        <div className="flex h-full w-[38px] items-center justify-center bg-[#c6c6c6]">
          <svg width="13" height="13" viewBox="0 0 13 13">
            <path d="M0.5 0.5H12.5V12.5H0.5zM4.5 0.5V12.5M8.5 0.5V12.5M0.5 4.5H12.5M0.5 8.5H12.5" fill="none" stroke="#666" />
          </svg>
        </div>
        <div className="flex w-[38px] justify-center">
          <svg width="14" height="14" viewBox="0 0 14 14">
            <path d="M0.5 0.5H13.5V13.5H0.5z" fill="none" stroke="#666" />
            <path d="M3.5 2.5H10.5V11.5H3.5zM5 5H9M5 7H9M5 9H9" fill="none" stroke="#666" />
          </svg>
        </div>
        <div className="flex w-[38px] justify-center">
          <svg width="14" height="14" viewBox="0 0 14 14">
            <path d="M0.5 0.5H13.5V13.5H0.5zM4.5 0.5V8.5H9.5V0.5M0.5 8.5H13.5" fill="none" stroke="#666" />
          </svg>
        </div>
        <span className="ml-[3px] h-[2px] w-[6px] bg-[#555]" />
        <div className="relative ml-[3px] h-px w-[101px] bg-[#9a9a9a]">
          <span className="absolute left-[49px] top-[-8px] h-[17px] w-[4px] bg-[#666]" />
        </div>
        <span className="ml-[8px] text-[15px] font-bold leading-none text-[#555]">+</span>
        <span className="ml-[12px] mr-[7px] text-[11px]">100%</span>
      </div>
    </div>
  );
}

export default function App() {
  return (
    <div className="flex h-[1032px] w-[1920px] flex-col overflow-hidden bg-[#e6e6e6] font-['Noto_Sans',sans-serif]">
      <TitleBar />
      <TabBar />
      <Ribbon />
      <FormulaBar />
      <Sheet />
      <SheetTabs />
      <StatusBar />
    </div>
  );
}
